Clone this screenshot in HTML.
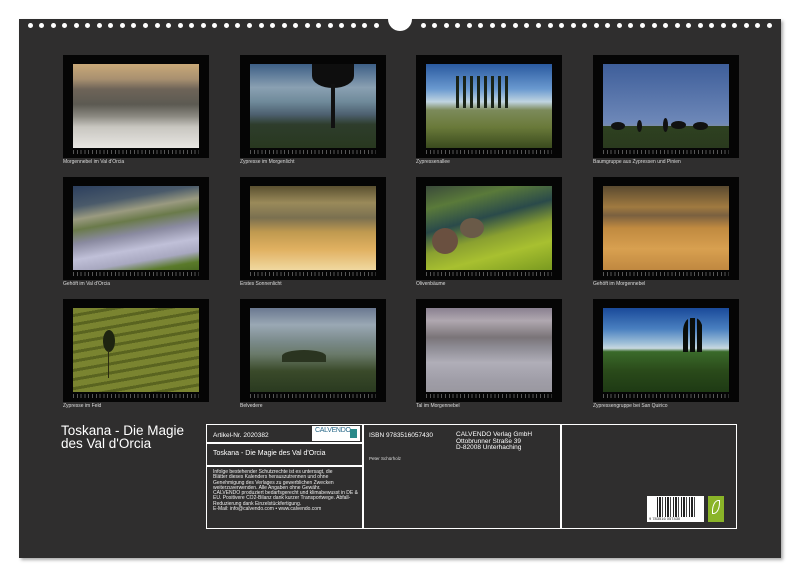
<!DOCTYPE html>
<html><head><meta charset="utf-8"><style>
*{margin:0;padding:0;box-sizing:border-box}
body{width:800px;height:577px;background:#fff;position:relative;overflow:hidden;font-family:"Liberation Sans",sans-serif;color:#fff}
.page{position:absolute;left:19px;top:19px;width:762px;height:539px;background:#2f2e2e;box-shadow:2px 2px 3px #aaa}
.dot{position:absolute;top:22.5px;width:5px;height:5px;border-radius:50%;background:#fff}
.notch{position:absolute;left:388px;top:7px;width:24px;height:24px;border-radius:50%;background:#fff}
.fr{position:absolute;width:146px;height:103px;background:#050505}
.ph{position:absolute;left:10px;top:9px;width:126px;height:84px}
.cal{position:absolute;left:10px;top:95px;width:126px;height:4px;background:repeating-linear-gradient(90deg,#999 0 1px,transparent 1px 3.8px);opacity:.55}
.cap{position:absolute;font-size:5px;color:#ddd;white-space:nowrap}
.box{position:absolute;border:1.5px solid #fff}
.t{position:absolute;white-space:nowrap}
</style></head><body>
<div class="page"></div>
<div id="dots"></div>
<div class="notch"></div>
<script>
var d=document.getElementById('dots'),h='';
for(var i=0;i<31;i++){h+='<div class="dot" style="left:'+(27.5+i*11.55)+'px"></div>';}
for(var i=0;i<31;i++){h+='<div class="dot" style="left:'+(420.5+i*11.55)+'px"></div>';}
d.innerHTML=h;
</script>

<!-- row1 -->
<div class="fr" style="left:63px;top:55px"><div class="ph" style="background:linear-gradient(180deg,#c9a978 0%,#a89070 18%,#6e6458 30%,#5c5a52 48%,#8a8880 62%,#c8c6c0 75%,#e8e6e2 100%)"></div><div class="cal"></div></div>
<div class="cap" style="left:63px;top:159px">Morgennebel im Val d'Orcia</div>
<div class="fr" style="left:240px;top:55px"><div class="ph" style="background:linear-gradient(180deg,#3d5f86 0%,#8aa0b2 28%,#6f8a9a 45%,#4d6070 60%,#2e3d2c 72%,#28381f 100%)"><div style="position:absolute;left:62px;top:0;width:42px;height:24px;border-radius:0 0 50% 50%;background:#0e0e0e"></div><div style="position:absolute;left:81px;top:20px;width:4px;height:44px;background:#111"></div></div><div class="cal"></div></div>
<div class="cap" style="left:240px;top:159px">Zypresse im Morgenlicht</div>
<div class="fr" style="left:416px;top:55px"><div class="ph" style="background:linear-gradient(180deg,#2a5aa0 0%,#6b9ad0 30%,#c0d4e0 45%,#7c8a5a 55%,#6a7a3a 75%,#3a4a1e 100%)"><div style="position:absolute;left:30px;top:12px;width:56px;height:32px;background:repeating-linear-gradient(90deg,#1a2418 0 3px,transparent 3px 7px)"></div></div><div class="cal"></div></div>
<div class="cap" style="left:416px;top:159px">Zypressenallee</div>
<div class="fr" style="left:593px;top:55px"><div class="ph" style="background:linear-gradient(180deg,#3e5e9a 0%,#6e88b8 70%,#7a8caa 74%,#2e4120 74%,#2a3a1e 100%)"><div style="position:absolute;left:8px;top:58px;width:14px;height:8px;border-radius:50%;background:#111"></div><div style="position:absolute;left:34px;top:56px;width:5px;height:12px;border-radius:50%;background:#111"></div><div style="position:absolute;left:60px;top:54px;width:5px;height:14px;border-radius:50%;background:#111"></div><div style="position:absolute;left:68px;top:57px;width:15px;height:8px;border-radius:50%;background:#111"></div><div style="position:absolute;left:90px;top:58px;width:15px;height:8px;border-radius:50%;background:#111"></div></div><div class="cal"></div></div>
<div class="cap" style="left:593px;top:159px">Baumgruppe aus Zypressen und Pinien</div>

<!-- row2 -->
<div class="fr" style="left:63px;top:177px"><div class="ph" style="background:linear-gradient(170deg,#2c3f5e 0%,#4a5a6a 20%,#9a9a80 32%,#6a7a4a 42%,#8a8aa0 55%,#c0c0d8 70%,#a8a8c0 82%,#5a7a2a 92%,#4a6a20 100%)"></div><div class="cal"></div></div>
<div class="cap" style="left:63px;top:281px">Gehöft im Val d'Orcia</div>
<div class="fr" style="left:240px;top:177px"><div class="ph" style="background:linear-gradient(180deg,#5a5030 0%,#9a8a5a 20%,#7a7050 38%,#c09a50 55%,#e0b060 75%,#f0d8a0 100%)"></div><div class="cal"></div></div>
<div class="cap" style="left:240px;top:281px">Erstes Sonnenlicht</div>
<div class="fr" style="left:416px;top:177px"><div class="ph" style="background:linear-gradient(165deg,#3a4a3a 0%,#5a7a3a 20%,#2a4a4a 40%,#8aa030 58%,#a8c030 75%,#7a9a20 100%)"><div style="position:absolute;left:6px;top:42px;width:26px;height:26px;border-radius:50%;background:#6a5040"></div><div style="position:absolute;left:34px;top:32px;width:24px;height:20px;border-radius:50%;background:#6a5a48"></div></div><div class="cal"></div></div>
<div class="cap" style="left:416px;top:281px">Olivenbäume</div>
<div class="fr" style="left:593px;top:177px"><div class="ph" style="background:linear-gradient(180deg,#5a4a30 0%,#a07a40 25%,#7a6040 35%,#c08a40 50%,#d8a050 75%,#c08840 100%)"></div><div class="cal"></div></div>
<div class="cap" style="left:593px;top:281px">Gehöft im Morgennebel</div>

<!-- row3 -->
<div class="fr" style="left:63px;top:299px"><div class="ph" style="background:repeating-linear-gradient(170deg,#7a8430 0 6px,#5a6420 6px 9px),linear-gradient(#6a7a2a,#8a8a30)"><div style="position:absolute;left:30px;top:22px;width:12px;height:22px;border-radius:50%;background:#1e2410"></div><div style="position:absolute;left:35px;top:42px;width:1px;height:28px;background:#2a2a10"></div></div><div class="cal"></div></div>
<div class="cap" style="left:63px;top:403px">Zypresse im Feld</div>
<div class="fr" style="left:240px;top:299px"><div class="ph" style="background:linear-gradient(180deg,#6a7890 0%,#9aa8b4 20%,#7a8a8a 40%,#6a7a6a 55%,#3a4a2a 75%,#2a3a20 100%)"><div style="position:absolute;left:32px;top:42px;width:44px;height:12px;border-radius:50% 50% 0 0;background:#2a3420"></div></div><div class="cal"></div></div>
<div class="cap" style="left:240px;top:403px">Belvedere</div>
<div class="fr" style="left:416px;top:299px"><div class="ph" style="background:linear-gradient(180deg,#8a8090 0%,#b0a8b0 15%,#7a7478 35%,#8a8890 45%,#b0aeb8 65%,#a09ea8 85%,#9a98a0 100%)"></div><div class="cal"></div></div>
<div class="cap" style="left:416px;top:403px">Tal im Morgennebel</div>
<div class="fr" style="left:593px;top:299px"><div class="ph" style="background:linear-gradient(180deg,#1a4a9a 0%,#4a80c0 25%,#a0c0d8 42%,#c8d8e0 48%,#3a6a2a 52%,#2a4a1a 75%,#1e3a14 100%)"><div style="position:absolute;left:80px;top:10px;width:20px;height:34px;background:repeating-linear-gradient(90deg,#0a0e0a 0 5px,transparent 5px 7px);border-radius:40% 40% 0 0"></div></div><div class="cal"></div></div>
<div class="cap" style="left:593px;top:403px">Zypressengruppe bei San Quirico</div>

<!-- title -->
<div class="t" style="left:61px;top:424px;font-size:13.5px;line-height:13px">Toskana - Die Magie<br>des Val d'Orcia</div>

<!-- info box -->
<div class="box" style="left:206px;top:424px;width:531px;height:105px"></div>
<div style="position:absolute;left:362px;top:424px;width:1.5px;height:105px;background:#fff"></div>
<div style="position:absolute;left:560px;top:424px;width:1.5px;height:105px;background:#fff"></div>
<div style="position:absolute;left:206px;top:442px;width:157px;height:1.5px;background:#fff"></div>
<div style="position:absolute;left:206px;top:465px;width:157px;height:1.5px;background:#fff"></div>
<div class="t" style="left:213px;top:432px;font-size:6.5px">Artikel-Nr. 2020382</div>
<div style="position:absolute;left:312px;top:426px;width:48px;height:15px;background:#fff"><span style="position:absolute;left:3px;top:1px;font-size:7px;color:#2a6a8a;letter-spacing:-.3px">CALVENDO</span><div style="position:absolute;left:38px;top:3px;width:7px;height:9px;background:#2a8a8a"></div></div>
<div class="t" style="left:213px;top:450px;font-size:7px">Toskana - Die Magie des Val d'Orcia</div>
<div class="t" style="left:213px;top:470px;font-size:5px;line-height:5.3px;color:#eee">Infolge bestehender Schutzrechte ist es untersagt, die<br>Blätter dieses Kalenders herauszutrennen und ohne<br>Genehmigung des Verlages zu gewerblichen Zwecken<br>weiterzuverwenden. Alle Angaben ohne Gewähr.<br>CALVENDO produziert bedarfsgerecht und klimabewusst in DE &amp;<br>EU. Positivere CO2-Bilanz dank kurzer Transportwege. Abfall-<br>Reduzierung dank Einzelstückfertigung.<br>E-Mail: info@calvendo.com • www.calvendo.com</div>
<div class="t" style="left:369px;top:432px;font-size:6.5px">ISBN 9783516057430</div>
<div class="t" style="left:369px;top:456px;font-size:4.5px;color:#ddd">Peter Schürholz</div>
<div class="t" style="left:456px;top:432px;font-size:6.5px;line-height:6.5px">CALVENDO Verlag GmbH<br>Ottobrunner Straße 39<br>D-82008 Unterhaching</div>
<div style="position:absolute;left:647px;top:496px;width:57px;height:26px;background:#fff"><div style="position:absolute;left:10px;top:1px;width:38px;height:20px;background:repeating-linear-gradient(90deg,#222 0 1px,#fff 1px 2px,#222 2px 4px,#fff 4px 5px,#444 5px 6px,#fff 6px 8px)"></div><span style="position:absolute;left:2px;top:20px;font-size:4px;color:#222">9 783516 057430</span></div>
<div style="position:absolute;left:708px;top:496px;width:16px;height:26px;background:#8ab428"><div style="position:absolute;left:4px;top:4px;width:8px;height:14px;border:1.5px solid #fff;border-radius:80% 0 80% 0"></div></div>
</body></html>
